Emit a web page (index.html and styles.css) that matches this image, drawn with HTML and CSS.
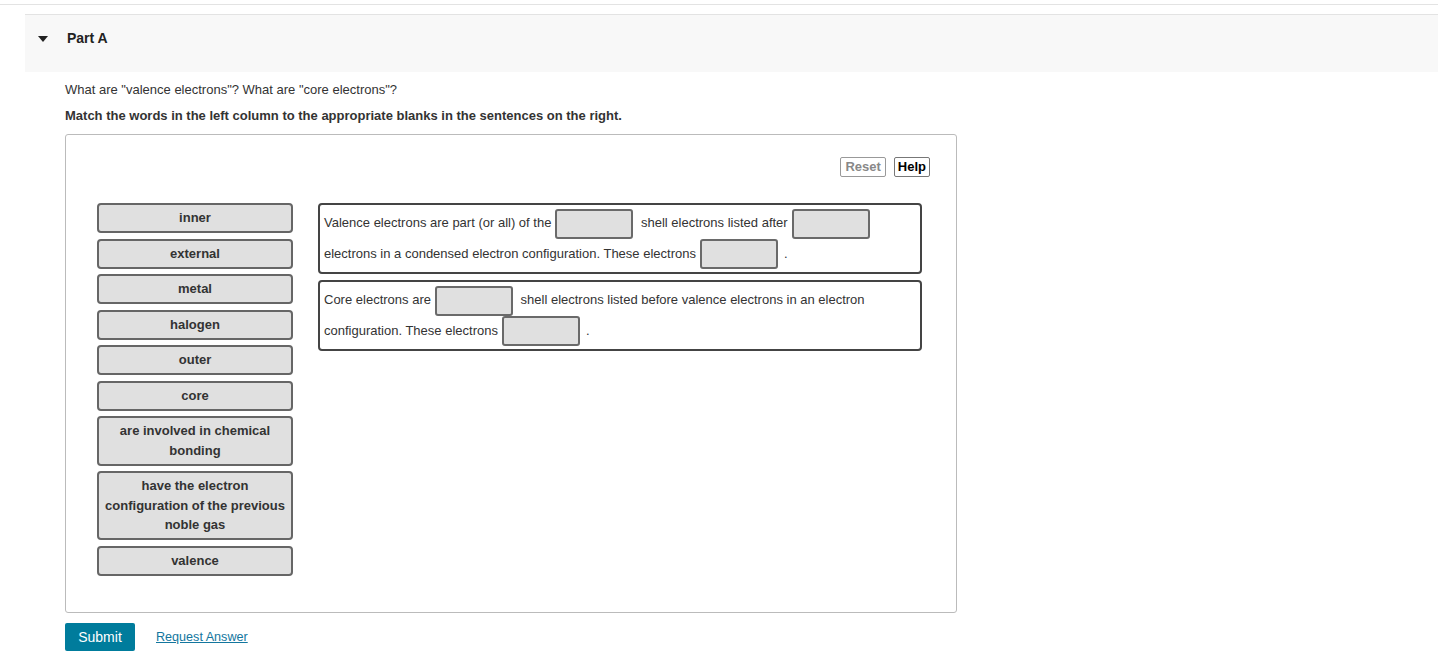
FILE: index.html
```html
<!DOCTYPE html>
<html lang="en">
<head>
    <meta charset="UTF-8">
    <title>Part A - Valence and core electrons</title>
    <link rel="stylesheet" href="styles.css">
</head>
<body>
    <div class="topbar"></div>

    <div class="part-header">
        <span class="caret"></span>
        <h2>Part A</h2>
    </div>

    <div class="content">
        <p class="question">What are "valence electrons"? What are "core electrons"?</p>
        <p class="instruction">Match the words in the left column to the appropriate blanks in the sentences on the right.</p>

        <div class="match-box">
            <div class="toolbar">
                <button class="tool-btn disabled">Reset</button>
                <button class="tool-btn">Help</button>
            </div>

            <div class="match-area">
                <div class="tiles">
                    <div class="tile">inner</div>
                    <div class="tile">external</div>
                    <div class="tile">metal</div>
                    <div class="tile">halogen</div>
                    <div class="tile">outer</div>
                    <div class="tile">core</div>
                    <div class="tile">are involved in chemical bonding</div>
                    <div class="tile">have the electron configuration of the previous noble gas</div>
                    <div class="tile">valence</div>
                </div>

                <div class="sentences">
                    <div class="sentence">Valence electrons are part (or all) of the<span class="blank"></span> shell electrons listed after<span class="blank"></span> electrons in a condensed electron configuration. These electrons<span class="blank end"></span>.</div>
                    <div class="sentence">Core electrons are<span class="blank"></span> shell electrons listed before valence electrons in an electron configuration. These electrons<span class="blank end"></span>.</div>
                </div>
            </div>
        </div>

        <div class="actions">
            <button class="submit">Submit</button>
            <a href="#" class="request">Request Answer</a>
        </div>
    </div>
</body>
</html>
```

FILE: styles.css
```css
* {
    margin: 0;
    padding: 0;
    box-sizing: border-box;
    font-family: "Liberation Sans", Arial, sans-serif;
}

body {
    background: white;
    color: #333;
}

.topbar {
    height: 5px;
    border-bottom: 1px solid #e3e3e3;
    margin-bottom: 9px;
}

.part-header {
    margin-left: 25px;
    height: 58px;
    border-top: 1px solid #e3e3e3;
    background: #f8f8f8;
    display: flex;
    align-items: flex-start;
    padding-top: 14px;
}

.caret {
    width: 0;
    height: 0;
    border-left: 5px solid transparent;
    border-right: 5px solid transparent;
    border-top: 6px solid #222;
    margin: 7px 0 0 13px;
}

.part-header h2 {
    font-size: 14px;
    font-weight: bold;
    color: #222;
    line-height: 18px;
    margin-left: 19px;
}

.content {
    padding-left: 65px;
}

.question {
    font-size: 13px;
    line-height: 18px;
    margin-top: 9px;
}

.instruction {
    font-size: 13px;
    font-weight: bold;
    line-height: 18px;
    margin-top: 8px;
}

.match-box {
    margin-top: 9px;
    width: 892px;
    height: 479px;
    border: 1px solid #bbb;
    border-radius: 3px;
    padding: 22px 26px 0 31px;
}

.toolbar {
    display: flex;
    justify-content: flex-end;
    gap: 8px;
    height: 20px;
    margin-bottom: 26px;
}

.tool-btn {
    background: white;
    border: 1px solid #777;
    border-radius: 2px;
    font-size: 13px;
    font-weight: bold;
    color: #000;
    padding: 0 3px;
    height: 20px;
    line-height: 18px;
}

.tool-btn.disabled {
    color: #888;
    border-color: #999;
    padding: 0 4px;
}

.match-area {
    display: flex;
    align-items: flex-start;
    gap: 25px;
}

.tiles {
    width: 196px;
    display: flex;
    flex-direction: column;
    gap: 5.5px;
}

.tile {
    background: #e0e0e0;
    border: 2px solid #666;
    border-radius: 4px;
    padding: 3.25px 6px;
    text-align: center;
    font-size: 13px;
    font-weight: bold;
    line-height: 19.5px;
    color: #333;
}

.sentences {
    width: 604px;
    display: flex;
    flex-direction: column;
    gap: 6px;
}

.sentence {
    border: 2px solid #444;
    border-radius: 4px;
    padding: 3px 4px;
    font-size: 13px;
    line-height: 30px;
    color: #333;
}

.blank {
    display: inline-block;
    width: 78px;
    height: 30px;
    background: #e0e0e0;
    border: 2px solid #6a6a6a;
    border-radius: 3px;
    margin: 0 4px;
    vertical-align: middle;
}

.blank.end {
    margin-right: 6px;
}

.actions {
    display: flex;
    align-items: center;
    margin-top: 10px;
    gap: 21px;
}

.submit {
    background: #007c9c;
    color: white;
    border: none;
    border-radius: 2px;
    width: 70px;
    height: 28px;
    font-size: 14px;
}

.request {
    color: #13769e;
    font-size: 12.6px;
    text-decoration: underline;
}
```
